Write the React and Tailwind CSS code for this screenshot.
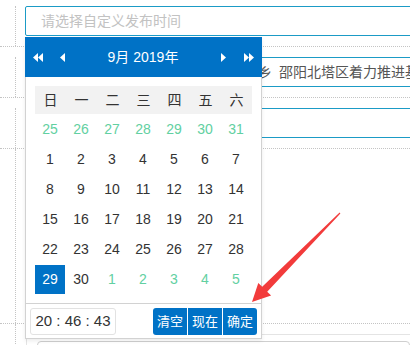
import React from 'react'

const FONT = "font-['Liberation_Sans','Noto_Sans_CJK_SC',sans-serif]"

const WEEK = ['日', '一', '二', '三', '四', '五', '六']

// 6 rows x 7 days; `out` marks days of the previous / next month
const DAYS = [
  ...[25, 26, 27, 28, 29, 30, 31].map((d) => ({ d, out: true })),
  ...Array.from({ length: 30 }, (_, i) => ({ d: i + 1 })),
  ...[1, 2, 3, 4, 5].map((d) => ({ d, out: true })),
]

function Row({ className = '', children }) {
  return (
    <div className={`flex border-b border-dotted border-[#c4c4c4] ${className}`}>
      <div className="w-[16px] shrink-0 border-r border-dotted border-[#c4c4c4]" />
      <div className="min-w-0 flex-1 pl-[9px]">{children}</div>
    </div>
  )
}

function Tri({ dir = 'left', double = false }) {
  const w = double ? 10 : 5
  const pts = double ? ['5,0 0,4.5 5,9', '10,0 5,4.5 10,9'] : ['5,0 0,4.5 5,9']
  return (
    <svg width={w} height="9" viewBox={`0 0 ${w} 9`} className={dir === 'right' ? 'scale-x-[-1]' : ''}>
      {pts.map((p) => (
        <polygon key={p} points={p} fill="#fff" />
      ))}
    </svg>
  )
}

function Calendar() {
  return (
    <div className="absolute left-[25px] top-[37px] w-[237px] bg-white shadow-[0_2px_4px_rgba(0,0,0,0.08)]">
      <div className="flex h-[40px] items-center bg-[#0072c6] pl-[8px] pr-[8px] text-white">
        <Tri double />
        <span className="ml-[17px]"><Tri /></span>
        <div className="flex-1 text-center text-[14px]">9月 2019年</div>
        <Tri dir="right" />
        <span className="ml-[18px]"><Tri dir="right" double /></span>
      </div>

      <div className="border-x border-b border-[#d2d2d2]">
        <div className="px-[9px] pb-[9px] pt-[9px]">
          <div className="grid h-[28px] grid-cols-7 items-center bg-[#f2f2f2] text-[14px] text-[#333]">
            {WEEK.map((w) => (
              <div key={w} className="text-center">{w}</div>
            ))}
          </div>
          <div className="grid grid-cols-7 text-[14px]">
            {DAYS.map((x, i) => {
              const sel = !x.out && x.d === 29
              return (
                <div key={i} className="flex h-[30px] items-end">
                  <div
                    className={`flex h-[29px] w-[30px] items-center justify-center ${
                      sel ? 'bg-[#0072c6] text-white' : x.out ? 'text-[#62d0a1]' : 'text-[#333]'
                    }`}
                  >
                    {x.d}
                  </div>
                </div>
              )
            })}
          </div>
        </div>

        <div className="flex items-center justify-between border-t border-[#d2d2d2] pb-[3px] pl-[4px] pr-[4px] pt-[4px]">
          <div className="flex h-[27px] w-[86px] items-center justify-center rounded-[3px] border border-[#e2e2e2] text-[15px] text-[#333]">
            20 : 46 : 43
          </div>
          <div className="flex overflow-hidden rounded-[3px] text-[13px] text-white">
            <button className="h-[27px] w-[34px] bg-[#0072c6]">清空</button>
            <button className="h-[27px] w-[35px] border-l border-white bg-[#0072c6]">现在</button>
            <button className="h-[27px] w-[35px] border-l border-white bg-[#0072c6]">确定</button>
          </div>
        </div>
      </div>
    </div>
  )
}

export default function App() {
  return (
    <div className={`relative h-[345px] w-[410px] overflow-hidden bg-white ${FONT}`}>
      <Row className="h-[47px] pt-[6px]">
        <div className="flex h-[30px] w-[420px] items-center rounded-[2px] border border-[#1b9bc6] pl-[15px] text-[14px] text-[#c2c2c2]">
          请选择自定义发布时间
        </div>
      </Row>
      <Row className="h-[51px] pt-[10px]">
        <div className="flex h-[30px] w-[420px] items-center overflow-hidden whitespace-nowrap rounded-[2px] border border-[#1b9bc6] pl-[8px] text-[14px] text-[#555]">
          推进美丽乡村建设打造宜居宜业和美乡{'\u2002'}邵阳北塔区着力推进基层治理现代化
        </div>
      </Row>
      <Row className="h-[51px] pt-[10px]">
        <div className="h-[30px] w-[420px] rounded-[2px] border border-[#1b9bc6]" />
      </Row>
      <Row className="h-[175px]" />
      <div className="flex h-[30px]">
        <div className="w-[16px] shrink-0 border-r border-dotted border-[#c4c4c4]" />
        <div className="flex-1 pl-[10px] pt-[10px]">
          <div className="h-full border-l border-t border-[#e4e4e4] pl-[10px] pt-[6px]">
            <div className="h-[30px] rounded-[4px] border border-[#cfcfcf]" />
          </div>
        </div>
      </div>

      <Calendar />

      <svg className="pointer-events-none absolute left-0 top-0" width="410" height="345" viewBox="0 0 410 345">
        <polygon
          points="339.6,212.6 262.2,286.7 258.3,282.9 252,302 271.1,295.5 267.2,291.7 340.4,213.4"
          fill="#f23b3b"
        />
      </svg>
    </div>
  )
}
